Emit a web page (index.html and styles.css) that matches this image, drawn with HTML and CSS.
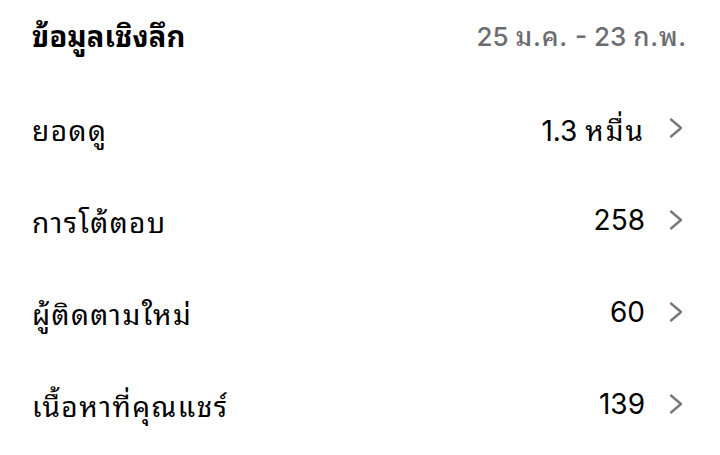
FILE: index.html
```html
<!DOCTYPE html>
<html lang="th">
<head>
<meta charset="utf-8">
<title>ข้อมูลเชิงลึก</title>
<link rel="stylesheet" href="styles.css">
</head>
<body>
<main class="insights">
  <header class="insights-head">
    <h1 class="insights-title">ข้อมูลเชิงลึก</h1>
    <span class="insights-range">25 <span class="th">ม.ค.</span> - 23 <span class="th">ก.พ.</span></span>
  </header>
  <ul class="insights-list">
    <li class="row">
      <span class="row-label">ยอดดู</span>
      <span class="row-value">1.3 <span class="th">หมื่น</span></span>
      <svg class="chev" viewBox="0 0 16 22" width="16" height="22"><path d="M3 2.5 L13 11 L3 19.5"/></svg>
    </li>
    <li class="row">
      <span class="row-label">การโต้ตอบ</span>
      <span class="row-value">258</span>
      <svg class="chev" viewBox="0 0 16 22" width="16" height="22"><path d="M3 2.5 L13 11 L3 19.5"/></svg>
    </li>
    <li class="row">
      <span class="row-label">ผู้ติดตามใหม่</span>
      <span class="row-value">60</span>
      <svg class="chev" viewBox="0 0 16 22" width="16" height="22"><path d="M3 2.5 L13 11 L3 19.5"/></svg>
    </li>
    <li class="row">
      <span class="row-label">เนื้อหาที่คุณแชร์</span>
      <span class="row-value">139</span>
      <svg class="chev" viewBox="0 0 16 22" width="16" height="22"><path d="M3 2.5 L13 11 L3 19.5"/></svg>
    </li>
  </ul>
</main>
</body>
</html>
```
FILE: styles.css
```css
html, body {
  margin: 0;
  padding: 0;
  background: #ffffff;
}
body {
  font-family: Inter, "Noto Sans Thai Looped", "Noto Sans", sans-serif;
  color: #000000;
}
.insights {
  padding: 0 33px 0 32px;
}
.insights-head {
  height: 68px;
  display: flex;
  align-items: center;
  justify-content: space-between;
}
.insights-title {
  margin: 0;
  font-size: 29px;
  font-weight: 700;
  letter-spacing: 0.2px;
}
.insights-range {
  font-size: 26px;
  font-weight: 500;
  color: #6c6c70;
}
.insights-range .th {
  letter-spacing: 0.8px;
}
.insights-list {
  list-style: none;
  margin: 14px 0 0;
  padding: 0;
}
.row {
  height: 92px;
  display: flex;
  align-items: center;
}
.row-label {
  flex: 1;
  font-size: 28px;
  letter-spacing: 1.5px;
}
.row-value {
  font-size: 28px;
  margin-right: 23px;
}
.row-value .th {
  letter-spacing: 2px;
}
.chev {
  margin-right: 3px;
  fill: none;
  stroke: #76767b;
  stroke-width: 2.3;
  stroke-linecap: round;
  stroke-linejoin: round;
}
```
